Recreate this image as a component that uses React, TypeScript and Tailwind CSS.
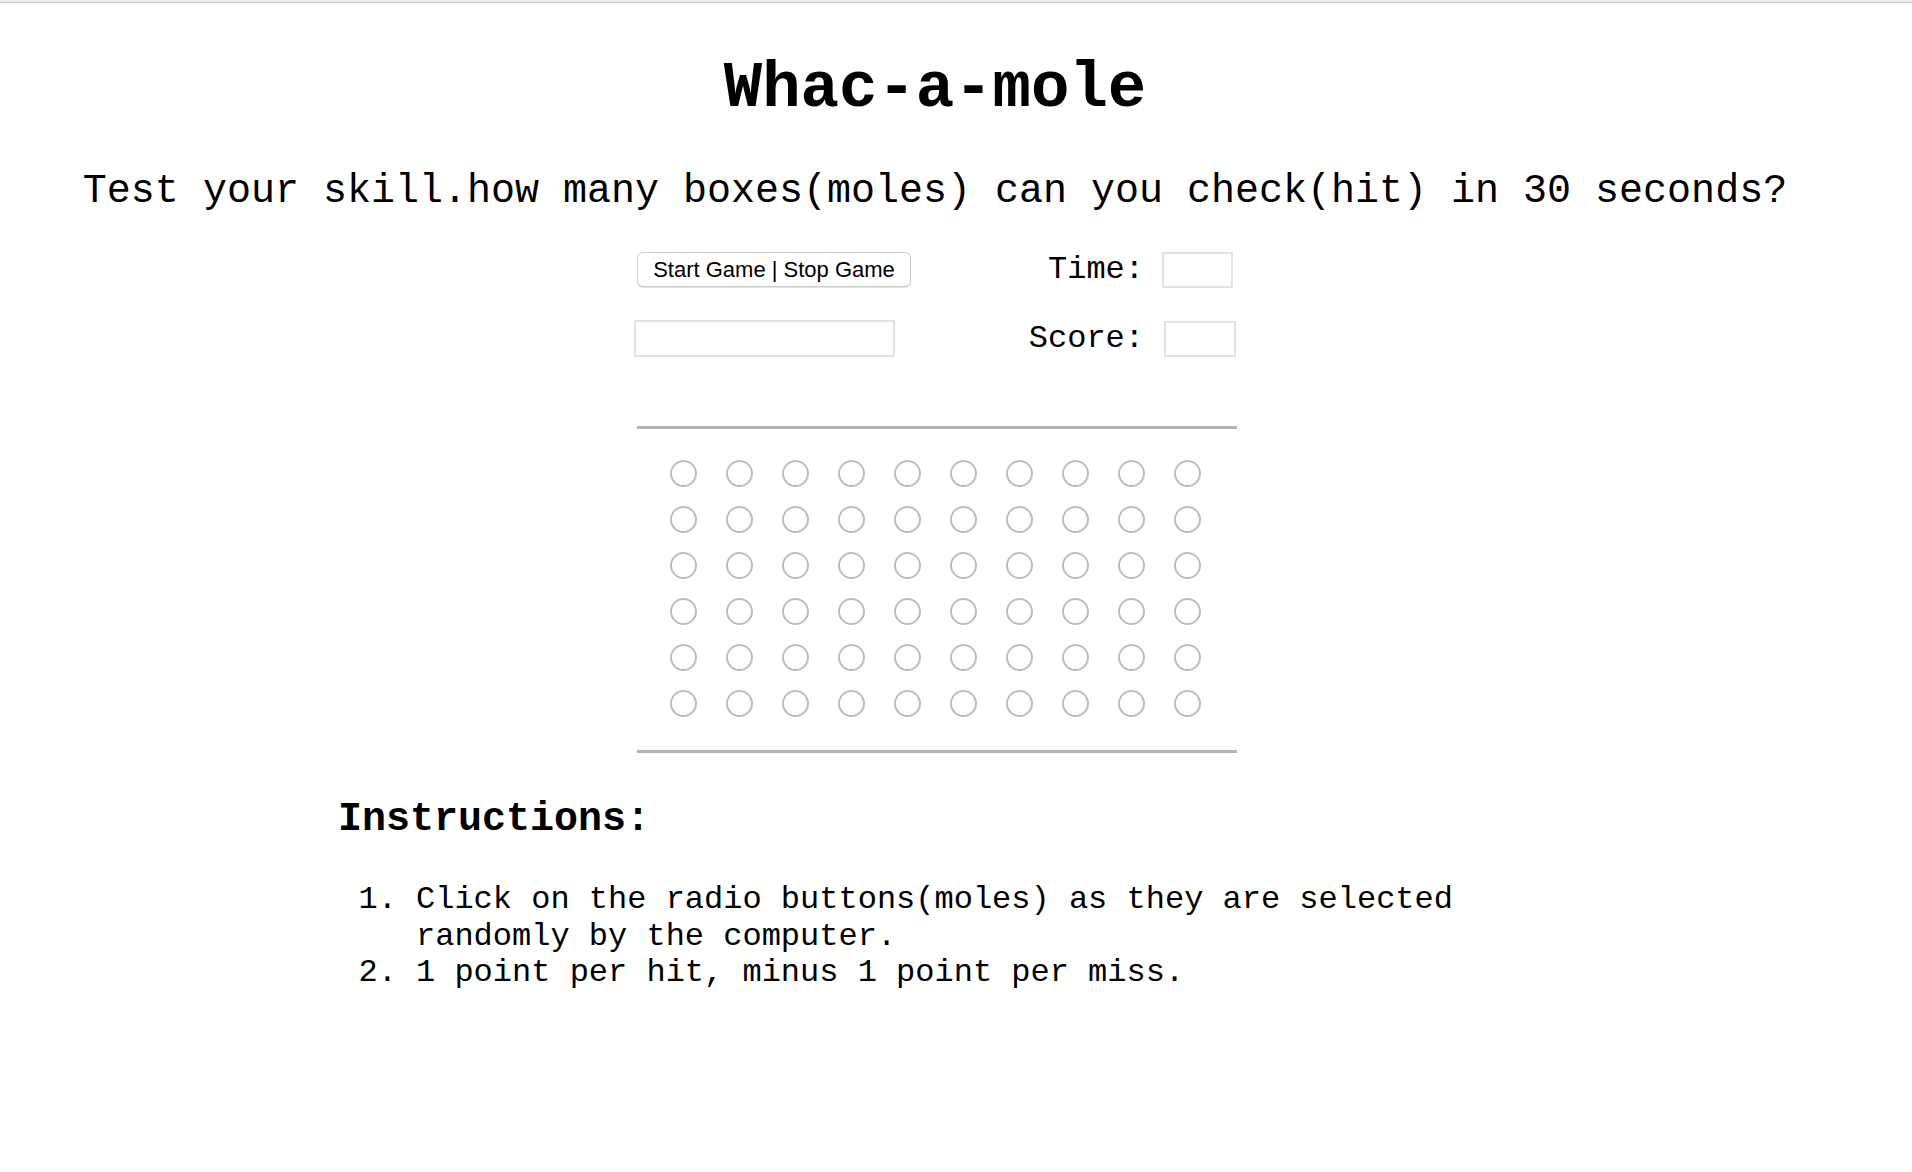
import React from "react";

const mono = "font-['Liberation_Mono','Courier_New',monospace]";

export default function App() {
  const rows = Array.from({ length: 6 });
  const cols = Array.from({ length: 10 });
  return (
    <div className="min-h-screen bg-white text-black">
      <div className="h-[3px] bg-[#ececec] border-b border-[#cacaca]" />
      <div className={`w-[1874px] ${mono}`}>
        <h1 className="mt-[54px] pr-[4px] text-center text-[64px] leading-none font-bold">Whac-a-mole</h1>
        <h2 className="mt-[51px] pr-[4px] text-center text-[40px] leading-none font-normal whitespace-nowrap">
          Test your skill.how many boxes(moles) can you check(hit) in 30 seconds?
        </h2>

        <div className="w-[600px] mx-auto">
          <div className="mt-[39px] flex items-center h-[37px]">
            <button className="w-[274px] h-[35px] rounded-[6px] border border-[#cbcbcb] bg-white shadow-[0_1px_1px_rgba(0,0,0,0.12)] font-['Liberation_Sans',Arial,sans-serif] text-[22px] leading-none text-black">
              Start Game | Stop Game
            </button>
            <div className="flex-1" />
            <span className="text-[32px] leading-none">Time:</span>
            <input className="ml-[18px] mr-[4px] w-[71px] h-[36px] border-2 border-[#e2e2e2] outline-none" readOnly />
          </div>
          <div className="mt-[32px] flex items-center h-[37px]">
            <input className="-ml-[3px] w-[261px] h-[37px] border-2 border-[#e2e2e2] outline-none" readOnly />
            <div className="flex-1" />
            <span className="text-[32px] leading-none">Score:</span>
            <input className="ml-[20px] mr-[1px] w-[72px] h-[36px] border-2 border-[#e2e2e2] outline-none" readOnly />
          </div>

          <div className="mt-[69px] h-[3px] bg-[#b5b1af]" />
          <div className="pt-[21px] pb-[24px]">
            <div className="w-[560px] ml-[18px] grid grid-cols-10">
              {rows.map((_, r) =>
                cols.map((_, c) => (
                  <div key={`${r}-${c}`} className="h-[46px] flex items-center justify-center">
                    <span className="w-[27px] h-[27px] rounded-full border-2 border-[#bdbdbd] bg-white" />
                  </div>
                ))
              )}
            </div>
          </div>
          <div className="h-[3px] bg-[#b5b1af]" />
        </div>

        <h3 className="mt-[47px] ml-[338px] text-[40px] leading-none font-bold">Instructions:</h3>
        <ol className="mt-[42px] ml-[338px] w-[1194px] text-[32px] leading-[36.6px]">
          <li className="flex">
            <span className="w-[78px] shrink-0 text-right pr-[19px]">1.</span>
            <span>Click on the radio buttons(moles) as they are selected randomly by the computer.</span>
          </li>
          <li className="flex">
            <span className="w-[78px] shrink-0 text-right pr-[19px]">2.</span>
            <span>1 point per hit, minus 1 point per miss.</span>
          </li>
        </ol>
      </div>
    </div>
  );
}
